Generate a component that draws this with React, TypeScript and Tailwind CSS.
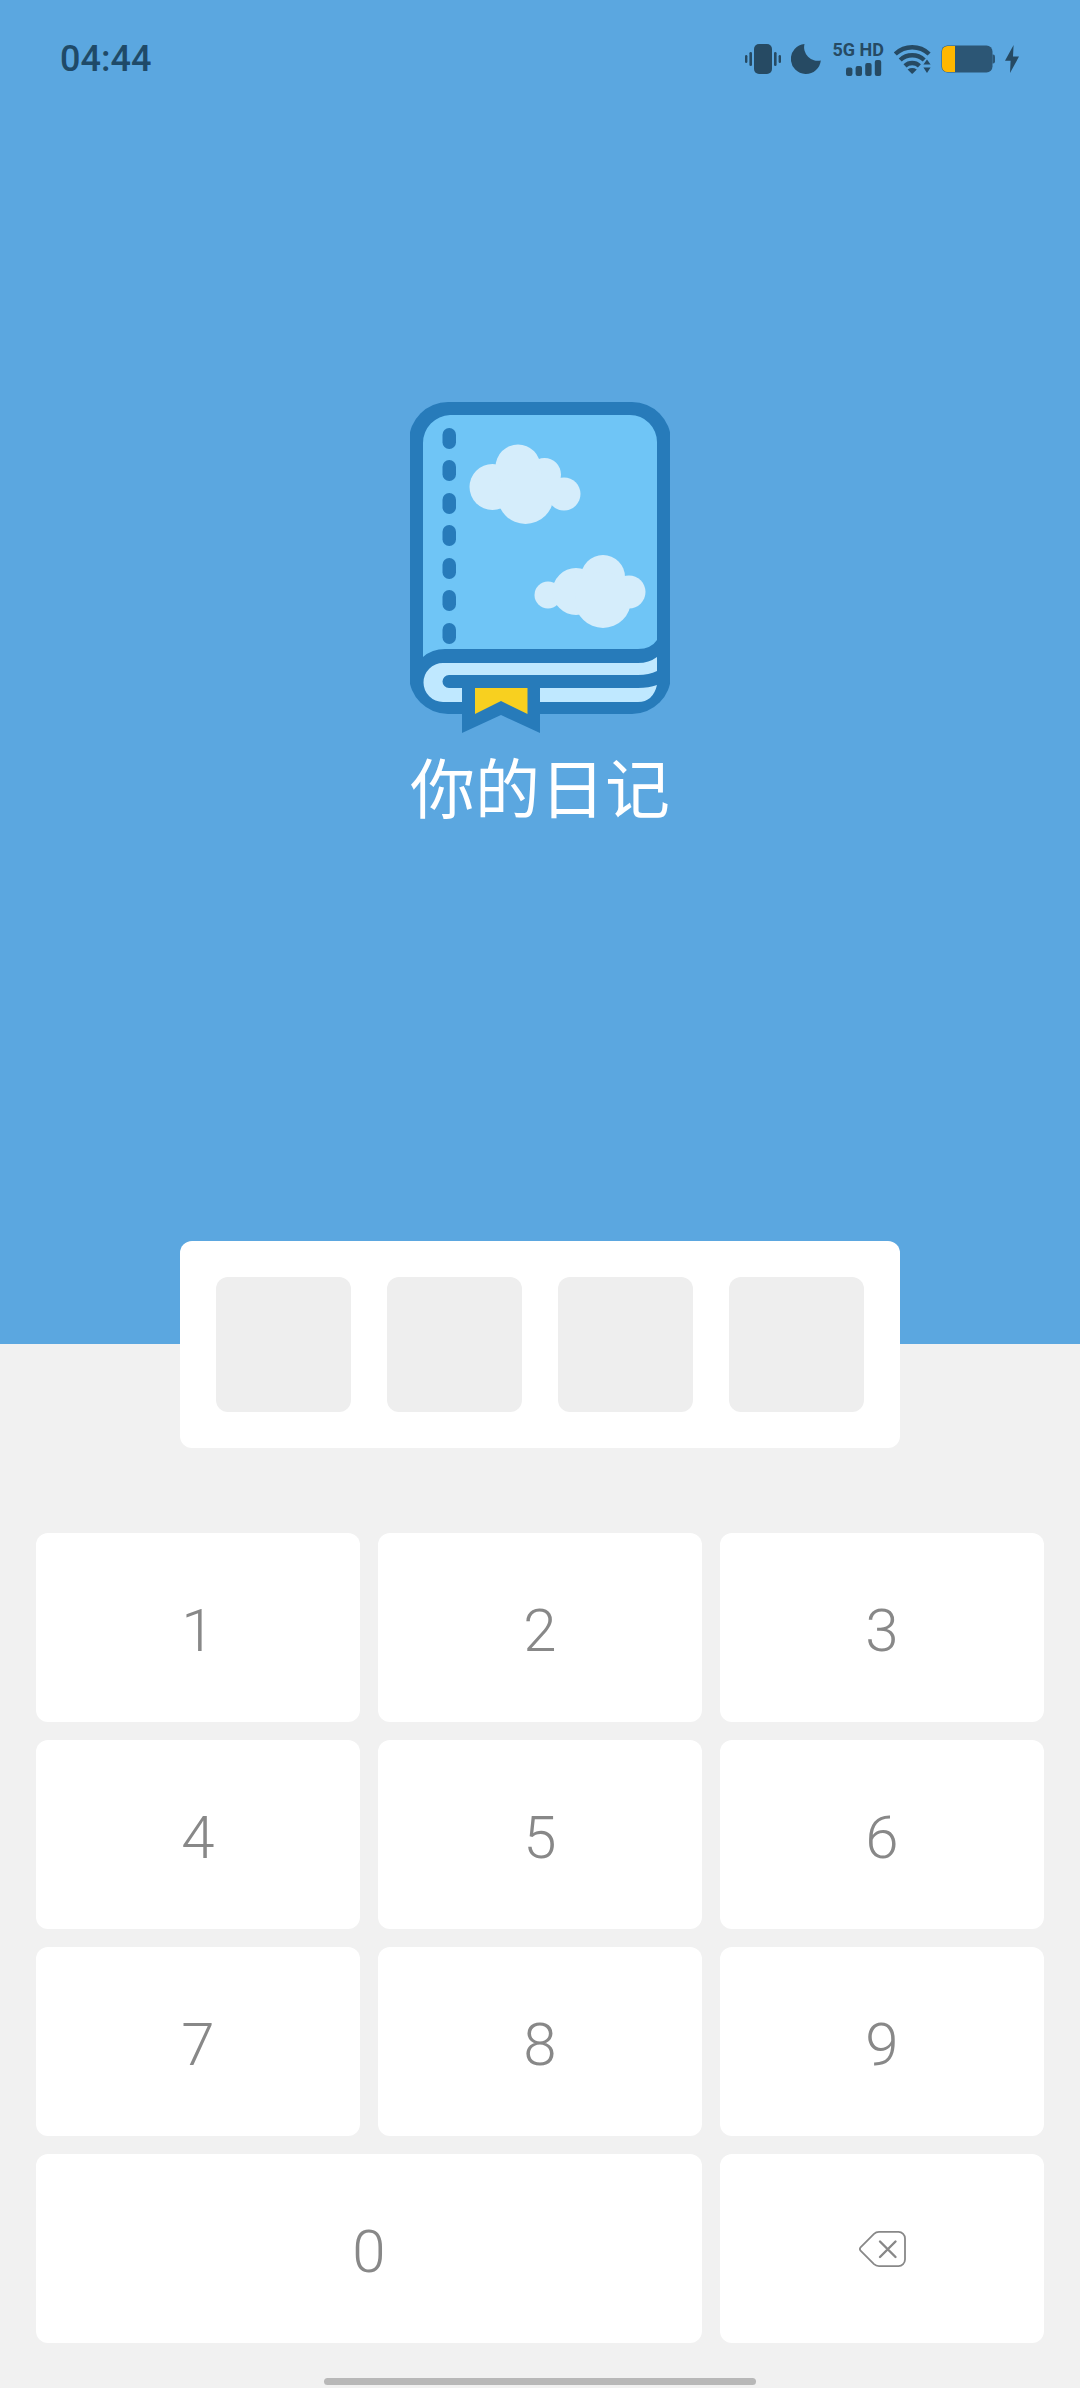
import { useState } from 'react';
import { clsx } from 'clsx';

const PIN_LENGTH = 4;
const KEYS = ['1', '2', '3', '4', '5', '6', '7', '8', '9', '0'];

const StatusBar = () => (
  <header className="flex items-center justify-between h-[118px] pl-[60px] pr-[61px] text-[#264a63]">
    <time className="text-[36px] leading-[42px] font-medium text-[#1f4a68]">04:44</time>
    <div className="flex items-center gap-[10px]">
      {/* Vibrate */}
      <svg width="36" height="30" viewBox="0 0 36 30" fill="currentColor">
        <rect x="9" y="0" width="18" height="30" rx="5" />
        <rect x="0" y="11" width="2.4" height="8" rx="1.2" />
        <rect x="4.4" y="8" width="2.6" height="14" rx="1.3" />
        <rect x="29" y="8" width="2.6" height="14" rx="1.3" />
        <rect x="33.6" y="11" width="2.4" height="8" rx="1.2" />
      </svg>
      {/* Do not disturb */}
      <svg width="30" height="30" viewBox="0 0 30 30" fill="currentColor">
        <path d="M13.5 0A13.5 13.5 0 0 0 29.8 16.4A15 15 0 1 1 13.5 0Z" />
      </svg>
      <div className="flex flex-col items-end w-[53px] pb-[2px]">
        <span className="text-[18px] leading-[18px] font-bold whitespace-nowrap">5G HD</span>
        <svg width="38" height="17" viewBox="0 0 38 17" fill="currentColor">
          <rect x="0" y="8.5" width="6.4" height="8.5" rx="2" />
          <rect x="9.6" y="7" width="6.4" height="10" rx="2" />
          <rect x="19.2" y="4" width="6.4" height="13" rx="2" />
          <rect x="28.8" y="1" width="6.4" height="16" rx="2" />
        </svg>
      </div>
      {/* Wi-Fi */}
      <svg width="37" height="30" viewBox="0 0 37 30" fill="none" stroke="currentColor" strokeWidth="4.4">
        <path d="M1.3 10A24.5 24.5 0 0 1 35.1 10" />
        <path d="M6.2 16A17.5 17.5 0 0 1 30.2 16" />
        <path d="M11 21.8A10.5 10.5 0 0 1 25.4 21.8" />
        <path d="M13.6 25.4Q18.2 22.6 22.8 25.4L18.8 29.4Q18.2 30 17.6 29.4Z" fill="currentColor" stroke="none" />
        <path d="M33 15.4L36.6 20.6H29.4ZM33 29L29.4 23.6H36.6Z" fill="currentColor" stroke="none" />
      </svg>
      {/* Battery */}
      <svg width="54" height="28" viewBox="0 0 54 28">
        <rect x="0.5" y="0.5" width="51" height="27" rx="6" fill="#2c5675" />
        <path d="M51.5 9.5H52Q54 9.5 54 11.5V16.5Q54 18.5 52 18.5H51.5Z" fill="#2c5675" />
        <path d="M14 1V27H6.5A5.5 5.5 0 0 1 1 21.5V6.5A5.5 5.5 0 0 1 6.5 1Z" fill="#ffb700" />
      </svg>
      {/* Charging */}
      <svg width="14" height="28" viewBox="0 0 14 28" fill="currentColor">
        <path d="M8.6 0L0 15.8H5.6L5 28L14 11.6H8Z" />
      </svg>
    </div>
  </header>
);

const DiaryLogo = () => (
  <svg width="260" height="331" viewBox="0 0 260 331" aria-hidden="true">
    {/* Cover */}
    <rect x="-1" y="0" width="262" height="312" rx="39" fill="#277bba" />
    <path d="M13 255V41A28 28 0 0 1 40 13H220A27 27 0 0 1 247 40V238Q241 247 228 247H35Q22 247 13 255Z" fill="#6fc5f6" />

    {/* Stitches */}
    <g fill="#277bba">
      {[26, 58, 91, 123, 156, 188, 221].map((y) => (
        <rect key={y} x="32.5" y={y} width="13.5" height="21" rx="6.7" />
      ))}
    </g>

    {/* Clouds */}
    <g fill="#d5edfb">
      <circle cx="82.5" cy="85" r="23" />
      <circle cx="108" cy="65" r="22.5" />
      <circle cx="134.5" cy="72.5" r="16.5" />
      <circle cx="154" cy="92" r="16.5" />
      <circle cx="115.5" cy="94" r="28" />
      <circle cx="138" cy="193" r="13.5" />
      <circle cx="166" cy="189.5" r="23.5" />
      <circle cx="193" cy="175" r="22" />
      <circle cx="219" cy="190" r="16.5" />
      <circle cx="193" cy="198" r="28" />
    </g>

    {/* Pages */}
    <path
      d="M247 255Q239 261 228 261H33A19.5 19.5 0 0 0 33 300H228Q243 300 247 283Q239 286 228 286H39A6.5 6.5 0 0 1 39 273H228Q239 273 247 269Z"
      fill="#bfe8ff"
    />

    {/* Bookmark */}
    <path d="M52 286H130V331L91 313L52 331Z" fill="#277bba" />
    <path d="M65 286H117.5V312L91 299L65 312Z" fill="#f8d01f" />
  </svg>
);

const BackspaceIcon = () => (
  <svg width="47" height="36" viewBox="0 0 47 36" fill="none" stroke="currentColor" strokeLinecap="round" aria-hidden="true">
    <path
      d="M20 .9H39.5A6.5 6.5 0 0 1 46 7.4V28.6A6.5 6.5 0 0 1 39.5 35.1H20Q17 35.1 15 33.2L1.8 20Q0 18 1.8 16L15 2.8Q17 .9 20 .9Z"
      strokeWidth="1.8"
    />
    <path d="M21 10.5L36.5 26M36.5 10.5L21 26" strokeWidth="2.4" />
  </svg>
);

const App = () => {
  const [pin, setPin] = useState('');

  const pressKey = (key: string) => {
    setPin((prev) => (prev.length < PIN_LENGTH ? prev + key : prev));
  };

  return (
    <div className="flex flex-col min-h-screen bg-[#f1f1f1] font-['Roboto','Noto_Sans_CJK_SC',sans-serif]">
      {/* Header with logo */}
      <div className="flex-1 bg-[#5ba7e0] pb-[200px]">
        <StatusBar />
        <div className="flex flex-col items-center pt-[284px]">
          <DiaryLogo />
          <h1 className="mt-[4px] text-[65px] leading-[96px] font-normal text-white font-['Noto_Sans_CJK_SC',sans-serif]">
            你的日记
          </h1>
        </div>
      </div>

      {/* PIN boxes */}
      <div className="relative flex gap-[36px] self-center -mt-[103px] p-[36px] rounded-xl bg-white">
        {Array.from({ length: PIN_LENGTH }, (_, i) => (
          <input
            key={i}
            type="password"
            readOnly
            aria-label={`密码第 ${i + 1} 位`}
            value={pin[i] ?? ''}
            className="size-[135px] rounded-xl bg-[#eeeeee] text-center text-[60px] text-[#888888] outline-none"
          />
        ))}
      </div>

      {/* Keypad */}
      <div className="grid grid-cols-3 gap-[18px] px-[36px] mt-[85px]">
        {KEYS.map((key) => (
          <button
            key={key}
            type="button"
            onClick={() => pressKey(key)}
            className={clsx(
              'h-[189px] pt-[6px] rounded-xl bg-white text-[60px] leading-[70px] font-light text-[#888888]',
              key === '0' && 'col-span-2'
            )}
          >
            {key}
          </button>
        ))}
        <button
          type="button"
          aria-label="删除"
          onClick={() => setPin((prev) => prev.slice(0, -1))}
          className="flex items-center justify-center h-[189px] rounded-xl bg-white text-[#888888]"
        >
          <BackspaceIcon />
        </button>
      </div>

      {/* Home indicator */}
      <div className="self-center w-2/5 h-[7px] mt-[35px] mb-[3px] rounded-full bg-[#b8b8b8]" />
    </div>
  );
};

export default App;
